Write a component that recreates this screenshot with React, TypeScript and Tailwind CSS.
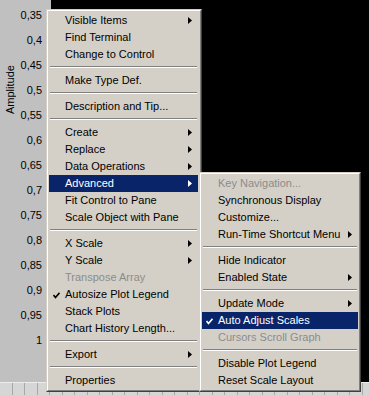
import React from "react";

type Item =
  | "sep"
  | { label: string; arrow?: boolean; disabled?: boolean; checked?: boolean; active?: boolean };

const mainItems: Item[] = [
  { label: "Visible Items", arrow: true },
  { label: "Find Terminal" },
  { label: "Change to Control" },
  "sep",
  { label: "Make Type Def." },
  "sep",
  { label: "Description and Tip..." },
  "sep",
  { label: "Create", arrow: true },
  { label: "Replace", arrow: true },
  { label: "Data Operations", arrow: true },
  { label: "Advanced", arrow: true, active: true },
  { label: "Fit Control to Pane" },
  { label: "Scale Object with Pane" },
  "sep",
  { label: "X Scale", arrow: true },
  { label: "Y Scale", arrow: true },
  { label: "Transpose Array", disabled: true },
  { label: "Autosize Plot Legend", checked: true },
  { label: "Stack Plots" },
  { label: "Chart History Length..." },
  "sep",
  { label: "Export", arrow: true },
  "sep",
  { label: "Properties" },
];

const subItems: Item[] = [
  { label: "Key Navigation...", disabled: true },
  { label: "Synchronous Display" },
  { label: "Customize..." },
  { label: "Run-Time Shortcut Menu", arrow: true },
  "sep",
  { label: "Hide Indicator" },
  { label: "Enabled State", arrow: true },
  "sep",
  { label: "Update Mode", arrow: true },
  { label: "Auto Adjust Scales", checked: true, active: true },
  { label: "Cursors Scroll Graph", disabled: true },
  "sep",
  { label: "Disable Plot Legend" },
  { label: "Reset Scale Layout" },
];

const labels = ["0,35", "0,4", "0,45", "0,5", "0,55", "0,6", "0,65", "0,7", "0,75", "0,8", "0,85", "0,9", "0,95", "1"];

function Arrow({ white }: { white: boolean }) {
  return (
    <svg width="4" height="7" viewBox="0 0 4 7" className="absolute right-[6px] top-[5px]">
      <path d="M0 0 L4 3.5 L0 7 Z" fill={white ? "#ffffff" : "#000000"} />
    </svg>
  );
}

function Check({ white }: { white: boolean }) {
  return (
    <svg width="7" height="7" viewBox="0 0 7 7" className="absolute left-[4px] top-[6px]">
      <path d="M0.5 3 L2.5 5.5 L6.5 0.8" fill="none" stroke={white ? "#ffffff" : "#000000"} strokeWidth="1.6" />
    </svg>
  );
}

function MenuList({ items }: { items: Item[] }) {
  return (
    <>
      {items.map((it, i) => {
        if (it === "sep") {
          return (
            <div key={i} className="h-[9px] px-[1px] pt-[3px]">
              <div className="h-[1px] bg-[#808080]" />
              <div className="h-[1px] bg-white" />
            </div>
          );
        }
        const cls = it.active
          ? "bg-[#0a246a] text-white"
          : it.disabled
          ? "text-[#8c8c8c]"
          : "text-black";
        return (
          <div key={i} className={`relative h-[17px] leading-[17px] pl-[16px] whitespace-nowrap ${cls}`}>
            {it.checked && <Check white={!!it.active} />}
            {it.label}
            {it.arrow && <Arrow white={!!it.active} />}
          </div>
        );
      })}
    </>
  );
}

function Menu({ items, className, innerPad }: { items: Item[]; className: string; innerPad: string }) {
  return (
    <div
      className={`absolute border border-t-[#d4d0c8] border-l-[#d4d0c8] border-r-[#404040] border-b-[#404040] bg-[#d4d0c8] ${className}`}
    >
      <div className={`border border-t-white border-l-white border-r-[#808080] border-b-[#808080] ${innerPad}`}>
        <MenuList items={items} />
      </div>
    </div>
  );
}

export default function App() {
  return (
    <div className="relative w-[369px] h-[395px] overflow-hidden font-['Liberation_Sans',Arial,sans-serif] text-[11px]">
      <div className="flex flex-col h-[395px]">
        <div className="flex h-[382px]">
          <div className="flex w-[51px] bg-[#c0c0c0]">
            <div className="w-[20px] pt-[66px] flex justify-center">
              <div className="[writing-mode:vertical-rl] rotate-180 text-black leading-[12px] h-[48px] pl-[1px]">Amplitude</div>
            </div>
            <div className="flex-1 flex flex-col pt-[3px] pr-[9px] text-right text-black">
              {labels.map((l) => (
                <div key={l} className="h-[25px] leading-[25px]">
                  {l}
                </div>
              ))}
            </div>
          </div>
          <div className="flex-1 bg-black" />
        </div>
        <div className="flex-1 flex bg-[#d6d6d6] border-t border-[#ececec]">
          {Array.from({ length: 30 }).map((_, i) => (
            <div key={i} className="w-[12.5px] shrink-0 border-r border-[#a8a8a8]" />
          ))}
        </div>
      </div>

      <Menu items={mainItems} className="left-[46px] top-[9px] w-[156px]" innerPad="pt-[1px] pb-[1px] pl-[1px] pr-[2px]" />
      <Menu items={subItems} className="left-[199px] top-[172px] w-[162px]" innerPad="p-[1px]" />
    </div>
  );
}
